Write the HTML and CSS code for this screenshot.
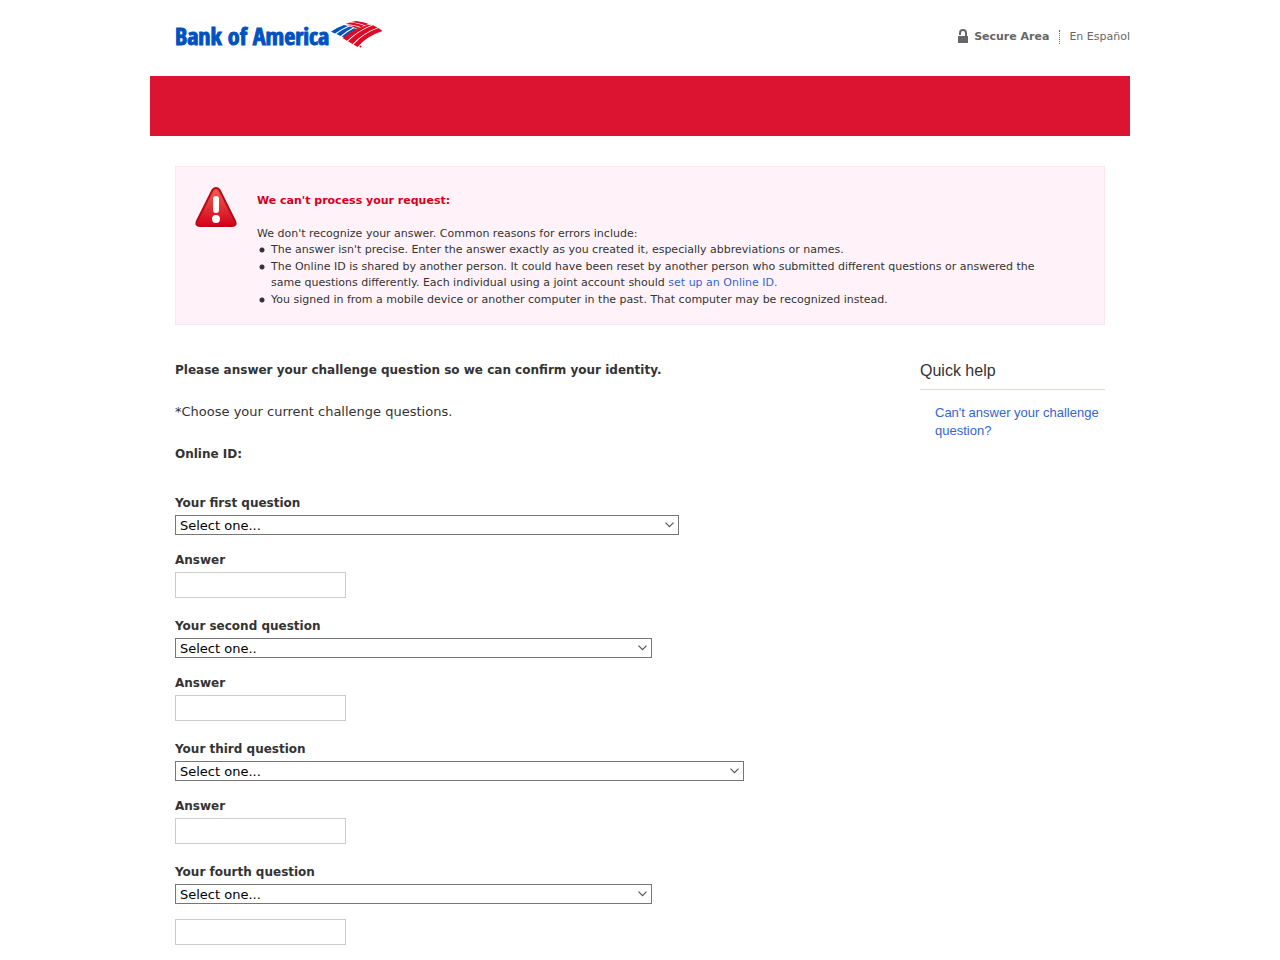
FILE: index.html
```html
<!DOCTYPE html>
<html lang="en">
<head>
<meta charset="utf-8">
<meta name="viewport" content="width=device-width, initial-scale=1">
<title>Challenge questions</title>
<link rel="stylesheet" href="styles.css">
</head>
<body>
<div class="page">
  <header class="header">
    <div class="logo">
      <span class="logo-name">Bank of America</span>
      <svg class="logo-flag" viewBox="0 0 52 28" aria-hidden="true">
        <g fill="#0052c2">
          <path d="M0 10.700Q7 6 13 4L17 5Q10 8 4 12.500Z"/>
          <path d="M5.500 13Q12 8 18.500 5.500L22 6.500Q15 10 9.500 15Z"/>
          <path d="M10.500 15.800Q17 10 23 7.200L26 8.300Q19 11.500 14 16Z"/>
        </g>
        <g fill="#dc0a24">
          <path d="M20 1 25 0Q33 1 38 3L34 4.300Q28 1.800 20 1Z"/>
          <path d="M14.500 3 19 1.500Q28 2.500 33 4.800L30 6.200Q24 3.800 14.500 3Z"/>
          <path d="M16 3.900Q24 4.500 29 6.700L26.500 7.900Q22 5.500 16 3.900Z"/>
          <path d="M11.500 17Q22 8.500 36 4L41 3.700Q27 9.500 16 19.700Z"/>
          <path d="M17 20.300Q28 9.500 42 4.300L46.500 6.500Q32 12 21.500 23Z"/>
          <path d="M22.500 23.600Q33 12 47.500 7L51.500 10Q36 15 26.500 26Z"/>
          <circle cx="29.500" cy="25.500" r="1"/>
        </g>
      </svg>
    </div>
    <nav class="utility">
      <span class="secure">
        <svg class="lock" viewBox="0 0 12 14" aria-hidden="true">
          <path d="M3 6V4a3 3 0 0 1 6 0v4" fill="none" stroke="#666" stroke-width="2"/>
          <rect x="1" y="7" width="10" height="7" fill="#666"/>
        </svg>
        Secure Area
      </span>
      <a class="language" href="#">En Español</a>
    </nav>
  </header>

  <div class="banner"></div>

  <main class="content">
    <section class="alert">
      <svg class="alert-icon" viewBox="0 0 42 42" aria-hidden="true">
        <defs>
          <linearGradient id="warn" x1="0" y1="0" x2="0" y2="1">
            <stop offset="0" stop-color="#ee6352"/>
            <stop offset="1" stop-color="#d6001c"/>
          </linearGradient>
        </defs>
        <path d="M17.500 3Q21 -1 24.500 3L40 34Q42 39 37 39H5Q0 39 2 34Z" fill="url(#warn)" stroke="#b60b12" stroke-width="2" stroke-linejoin="round"/>
        <rect x="18" y="9" width="6" height="17" rx="3" fill="#fff"/>
        <circle cx="21" cy="32" r="4" fill="#fff"/>
      </svg>
      <div class="alert-body">
        <h2 class="alert-title">We can't process your request:</h2>
        <p class="alert-text">We don't recognize your answer. Common reasons for errors include:</p>
        <ul class="reasons">
          <li>The answer isn't precise. Enter the answer exactly as you created it, especially abbreviations or names.</li>
          <li>The Online ID is shared by another person. It could have been reset by another person who submitted different questions or answered the same questions differently. Each individual using a joint account should <a href="#">set up an Online ID.</a></li>
          <li>You signed in from a mobile device or another computer in the past. That computer may be recognized instead.</li>
        </ul>
      </div>
    </section>

    <div class="columns">
      <section class="questions">
        <h1 class="lead">Please answer your challenge question so we can confirm your identity.</h1>
        <p class="note">*Choose your current challenge questions.</p>
        <p class="online-id">Online ID:</p>

        <div class="group">
          <label for="q1">Your first question</label>
          <select id="q1" class="select select-medium"><option>Select one...</option></select>
          <label class="answer-label" for="a1">Answer</label>
          <input id="a1" class="answer" type="text" autocomplete="off">
        </div>
        <div class="group">
          <label for="q2">Your second question</label>
          <select id="q2" class="select select-short"><option>Select one..</option></select>
          <label class="answer-label" for="a2">Answer</label>
          <input id="a2" class="answer" type="text" autocomplete="off">
        </div>
        <div class="group">
          <label for="q3">Your third question</label>
          <select id="q3" class="select select-long"><option>Select one...</option></select>
          <label class="answer-label" for="a3">Answer</label>
          <input id="a3" class="answer" type="text" autocomplete="off">
        </div>
        <div class="group">
          <label for="q4">Your fourth question</label>
          <select id="q4" class="select select-short"><option>Select one...</option></select>
          <input class="answer answer-bare" type="text" autocomplete="off" aria-label="Answer">
        </div>
      </section>

      <aside class="help">
        <h2 class="help-title">Quick help</h2>
        <a class="help-link" href="#">Can't answer your challenge question?</a>
      </aside>
    </div>
  </main>
</div>
</body>
</html>
```

FILE: styles.css
```css
* { box-sizing: border-box; }

body {
  margin: 0;
  background: #fff;
  color: #333;
  font-family: Verdana, "DejaVu Sans", sans-serif;
  font-size: 12px;
  line-height: 18px;
}

h1, h2, p, ul { margin: 0; padding: 0; font-size: inherit; }

a { color: #36c; text-decoration: none; }

.page { max-width: 980px; margin: 0 auto; }

.header {
  display: flex;
  justify-content: space-between;
  align-items: flex-start;
  padding: 20px 0 27px 25px;
}

.logo { display: flex; gap: 2px; }

.logo-name {
  color: #0052c2;
  font-family: "Liberation Sans Narrow", "Arial Narrow", "Open Sans Condensed", "Liberation Sans", sans-serif;
  font-size: 24px;
  font-weight: 700;
  line-height: 29px;
  padding-top: 1px;
  height: 29px;
  white-space: nowrap;
  -webkit-text-stroke: 1px #0052c2;
}

.logo-flag { width: 52px; height: 28px; margin-top: 1px; }

.utility {
  display: flex;
  align-items: center;
  padding-top: 8px;
  font-size: 11px;
  color: #666;
}

.secure { display: flex; align-items: center; gap: 5px; font-weight: 700; }

.lock { width: 12px; height: 14px; margin-bottom: 3px; }

.language {
  color: #666;
  margin-left: 10px;
  padding-left: 9px;
  line-height: 14px;
  border-left: 1px dotted #666;
}

.banner { height: 60px; background: #dc1431; }

.content { padding: 30px 25px; }

.alert {
  display: flex;
  gap: 20px;
  padding: 20px 45px 16px 19px;
  border: 1px solid #f9e6ef;
  background: #fff3f9;
  font-size: 11px;
  line-height: 1.5;
}

.alert-icon { flex: none; width: 42px; height: 42px; }

.alert-body { padding-top: 6px; }

.alert-title { color: #d6001c; margin-bottom: 16px; }

.reasons { list-style: none; }

.reasons li {
  padding-left: 14px;
  background: radial-gradient(circle at 5px 8px, #333 2px, transparent 3px);
}

.columns { display: flex; justify-content: space-between; gap: 20px; padding-top: 36px; }

.lead, .online-id { font-weight: 700; }

.note { margin: 24px 0; font-size: 13px; }

.online-id { margin-bottom: 31px; }

.group {
  display: flex;
  flex-direction: column;
  align-items: flex-start;
  margin-bottom: 19px;
}

.group label { font-weight: 700; margin-bottom: 3px; }

.group .answer-label { margin-top: 16px; }

.select {
  appearance: none;
  height: 20px;
  max-width: 100%;
  padding: 1px 16px 0 4px;
  border: 1px solid #767676;
  border-radius: 0;
  color: #000;
  background: #fff url("data:image/svg+xml,%3Csvg xmlns='http://www.w3.org/2000/svg' width='9' height='6'%3E%3Cpath d='M.5 .7 4.500 4.700 8.500 .7' fill='none' stroke='%23555' stroke-width='1.200'/%3E%3C/svg%3E") no-repeat right 4px center;
  font: 13px/17px Verdana, "DejaVu Sans", sans-serif;
}

.select-medium { width: 504px; }
.select-short { width: 477px; }
.select-long { width: 569px; }

.answer {
  width: 171px;
  height: 26px;
  padding: 3px;
  border: 1px solid #ccc;
  background: #fff;
  font: inherit;
}

.answer-bare { margin-top: 15px; }

.help { width: 185px; font-family: Arial, "Liberation Sans", sans-serif; }

.help-title {
  padding: 1px 0 9px;
  border-bottom: 1px solid #ded8d0;
  font-size: 16px;
  font-weight: 400;
}

.help-link { display: block; padding: 14px 0 0 15px; font-size: 13px; }
```
